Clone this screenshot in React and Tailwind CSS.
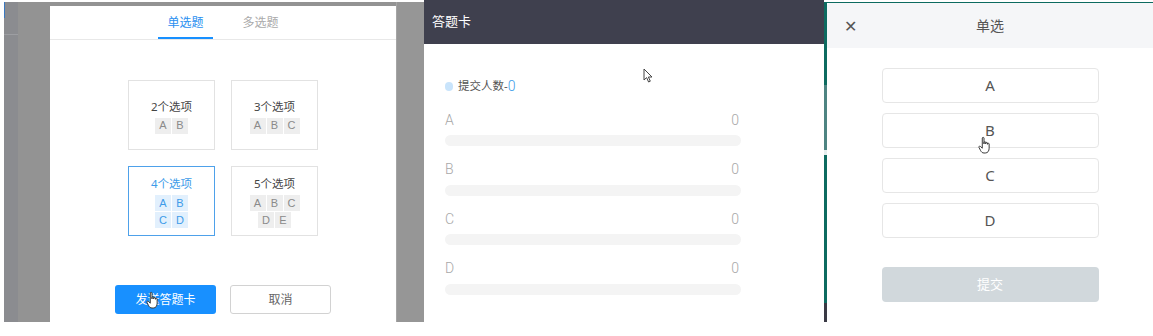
import React from "react";

function Chip({ c, sel }) {
  return (
    <div
      className={
        "w-[16px] h-[16px] flex items-center justify-center text-[11px] leading-none font-['Liberation_Sans',sans-serif] " +
        (sel ? "bg-[#e2f0fd] text-[#3d9be9]" : "bg-[#eeeeee] text-[#8a8a8a]")
      }
    >
      {c}
    </div>
  );
}

function Card({ title, rows, sel }) {
  return (
    <div
      className={
        "w-[87px] h-[70px] flex flex-col items-center justify-center pt-[3px] border " +
        (sel ? "border-[#4ea1ea]" : "border-[#e2e2e2]")
      }
    >
      <div className={"text-[11.5px] leading-[14px] " + (sel ? "text-[#3d9be9]" : "text-[#444]")}>{title}</div>
      <div className="mt-[4px] flex flex-col items-center gap-px">
        {rows.map((r, i) => (
          <div key={i} className="flex gap-px">
            {r.map((c) => (
              <Chip key={c} c={c} sel={sel} />
            ))}
          </div>
        ))}
      </div>
    </div>
  );
}

function Arrow({ className }) {
  return (
    <svg className={className} width="11" height="15" viewBox="0 0 11 15">
      <path d="M1 1 L1 12 L3.6 9.6 L5.6 14 L7.3 13.2 L5.4 9 L9 9 Z" fill="#fff" stroke="#444" strokeWidth="1" strokeLinejoin="round" />
    </svg>
  );
}

function Hand({ className }) {
  return (
    <svg className={className} width="15" height="19" viewBox="0 0 14 17">
      <path
        d="M4 1.5 C4 0.7 5.6 0.7 5.6 1.5 L5.6 7 L5.6 5.6 C5.6 4.8 7.2 4.8 7.2 5.6 L7.2 7 L7.2 6.2 C7.2 5.4 8.8 5.4 8.8 6.2 L8.8 7.4 L8.8 7 C8.8 6.2 10.4 6.2 10.4 7 L10.4 11 C10.4 13.5 9.2 15.5 6.8 15.5 L5.6 15.5 C4 15.5 3.2 14.6 2.4 13.2 L0.9 10.2 C0.5 9.4 1.6 8.7 2.3 9.4 L4 11 Z"
        fill="#fff"
        stroke="#333"
        strokeWidth="0.9"
        strokeLinejoin="round"
      />
    </svg>
  );
}

export default function App() {
  const font = "font-['Noto_Sans','Noto_Sans_CJK_SC',sans-serif]";
  return (
    <div className={"relative w-[1153px] h-[336px] bg-white overflow-hidden " + font}>
      <div className="flex h-[322px]">
        {/* Panel 1 */}
        <div className="w-[424px] h-full flex pt-[2px] pl-[4px]">
          <div className="w-[14px] h-full bg-[#8b8c90] flex flex-col">
            <div className="h-[16px] w-px bg-[#3a78c0]" />
            <div className="h-[16px]" />
            <div className="h-px bg-[#9d9ea2]" />
          </div>
          <div className="w-[32px] h-full bg-[#939393]" />
          <div className="w-[346px] h-full bg-[#939393] pt-[4px] flex flex-col">
            <div className="flex-1 bg-white flex flex-col">
              <div className="h-[34px] border-b border-[#e8e8e8] flex justify-center gap-[20px]">
                <div className="w-[55px] h-full flex items-center justify-center text-[12px] text-[#2a8ff0] border-b-2 border-[#1890ff] pt-[2px]">
                  单选题
                </div>
                <div className="w-[55px] h-full flex items-center justify-center text-[12px] text-[#aaaaaa]">
                  多选题
                </div>
              </div>
              <div className="mt-[40px] grid grid-cols-[87px_87px] gap-x-[16px] gap-y-[16px] justify-center">
                <Card title="2个选项" rows={[["A", "B"]]} />
                <Card title="3个选项" rows={[["A", "B", "C"]]} />
                <Card title="4个选项" rows={[["A", "B"], ["C", "D"]]} sel />
                <Card title="5个选项" rows={[["A", "B", "C"], ["D", "E"]]} />
              </div>
              <div className="mt-[49px] flex justify-center gap-[14px]">
                <div className="w-[101px] h-[29px] rounded-[3px] bg-[#1890ff] text-white text-[12px] flex items-center justify-center">
                  发送答题卡
                </div>
                <div className="w-[101px] h-[29px] rounded-[3px] border border-[#d2d2d2] text-[#666] text-[12px] flex items-center justify-center">
                  取消
                </div>
              </div>
            </div>
          </div>
          <div className="w-[28px] h-full bg-[#969696] border-l border-[#a5a5a5]" />
        </div>

        {/* Panel 2 */}
        <div className="w-[400px] h-full flex flex-col bg-white">
          <div className="h-[44px] bg-[#3f404e] flex items-center pl-[8px] text-white text-[13px]">答题卡</div>
          <div className="pl-[21px] pt-[33px] flex flex-col">
            <div className="h-[18px] flex items-center">
              <div className="w-[8px] h-[9px] rounded-full bg-[#c9e4fb]" />
              <span className="ml-[5px] text-[11.5px] text-[#555]">提交人数-</span>
              <span className="text-[14px] text-[#3d9be9] font-['Roboto',sans-serif] font-light">0</span>
            </div>
            <div className="mt-[16px] flex flex-col gap-[14.5px]">
              {["A", "B", "C", "D"].map((l) => (
                <div key={l} className="w-[296px] flex flex-col">
                  <div className="h-[18px] flex items-center justify-between text-[14px] text-[#a8a8a8] font-['Roboto',sans-serif] font-light pr-[2px]">
                    <span>{l}</span>
                    <span>0</span>
                  </div>
                  <div className="mt-[6px] h-[11px] rounded-full bg-[#f4f4f4]" />
                </div>
              ))}
            </div>
          </div>
        </div>

        {/* Panel 3 */}
        <div className="w-[329px] h-full flex">
          <div className="w-[3px] h-full flex flex-col">
            <div className="h-[2px] bg-white" />
            <div className="h-[83px] bg-[#0d6b60]" />
            <div className="h-[65px] bg-[#4e8482]" />
            <div className="h-[5px] bg-[#e6eeee]" />
            <div className="h-[148px] bg-[#0d6b60]" />
            <div className="flex-1 bg-[#3a3a45]" />
          </div>
          <div className="flex-1 h-full flex flex-col">
            <div className="h-[2px] bg-white" />
            <div className="h-px bg-[#0d6b60]" />
            <div className="flex-1 bg-white rounded-tl-[4px] flex flex-col items-center">
              <div className="w-full h-[45px] bg-[#f5f6f8] rounded-tl-[4px] flex items-center">
                <div className="w-[60px] pl-[17px] text-[#555] text-[16px] leading-none">✕</div>
                <div className="flex-1 text-center text-[14px] text-[#555]">单选</div>
                <div className="w-[60px]" />
              </div>
              <div className="mt-[20px] flex flex-col gap-[10px]">
                {["A", "B", "C", "D"].map((l) => (
                  <div
                    key={l}
                    className="w-[217px] h-[35px] border border-[#e6e6e6] rounded-[4px] flex items-center justify-center text-[15px] text-[#555]"
                  >
                    {l}
                  </div>
                ))}
              </div>
              <div className="mt-[29px] w-[217px] h-[35px] rounded-[4px] bg-[#d1d8dc] text-white text-[13px] flex items-center justify-center">
                提交
              </div>
            </div>
          </div>
        </div>
      </div>

      <Arrow className="absolute left-[643px] top-[68px]" />
      <Hand className="absolute left-[146px] top-[291px]" />
      <Hand className="absolute left-[978px] top-[136px]" />
    </div>
  );
}
